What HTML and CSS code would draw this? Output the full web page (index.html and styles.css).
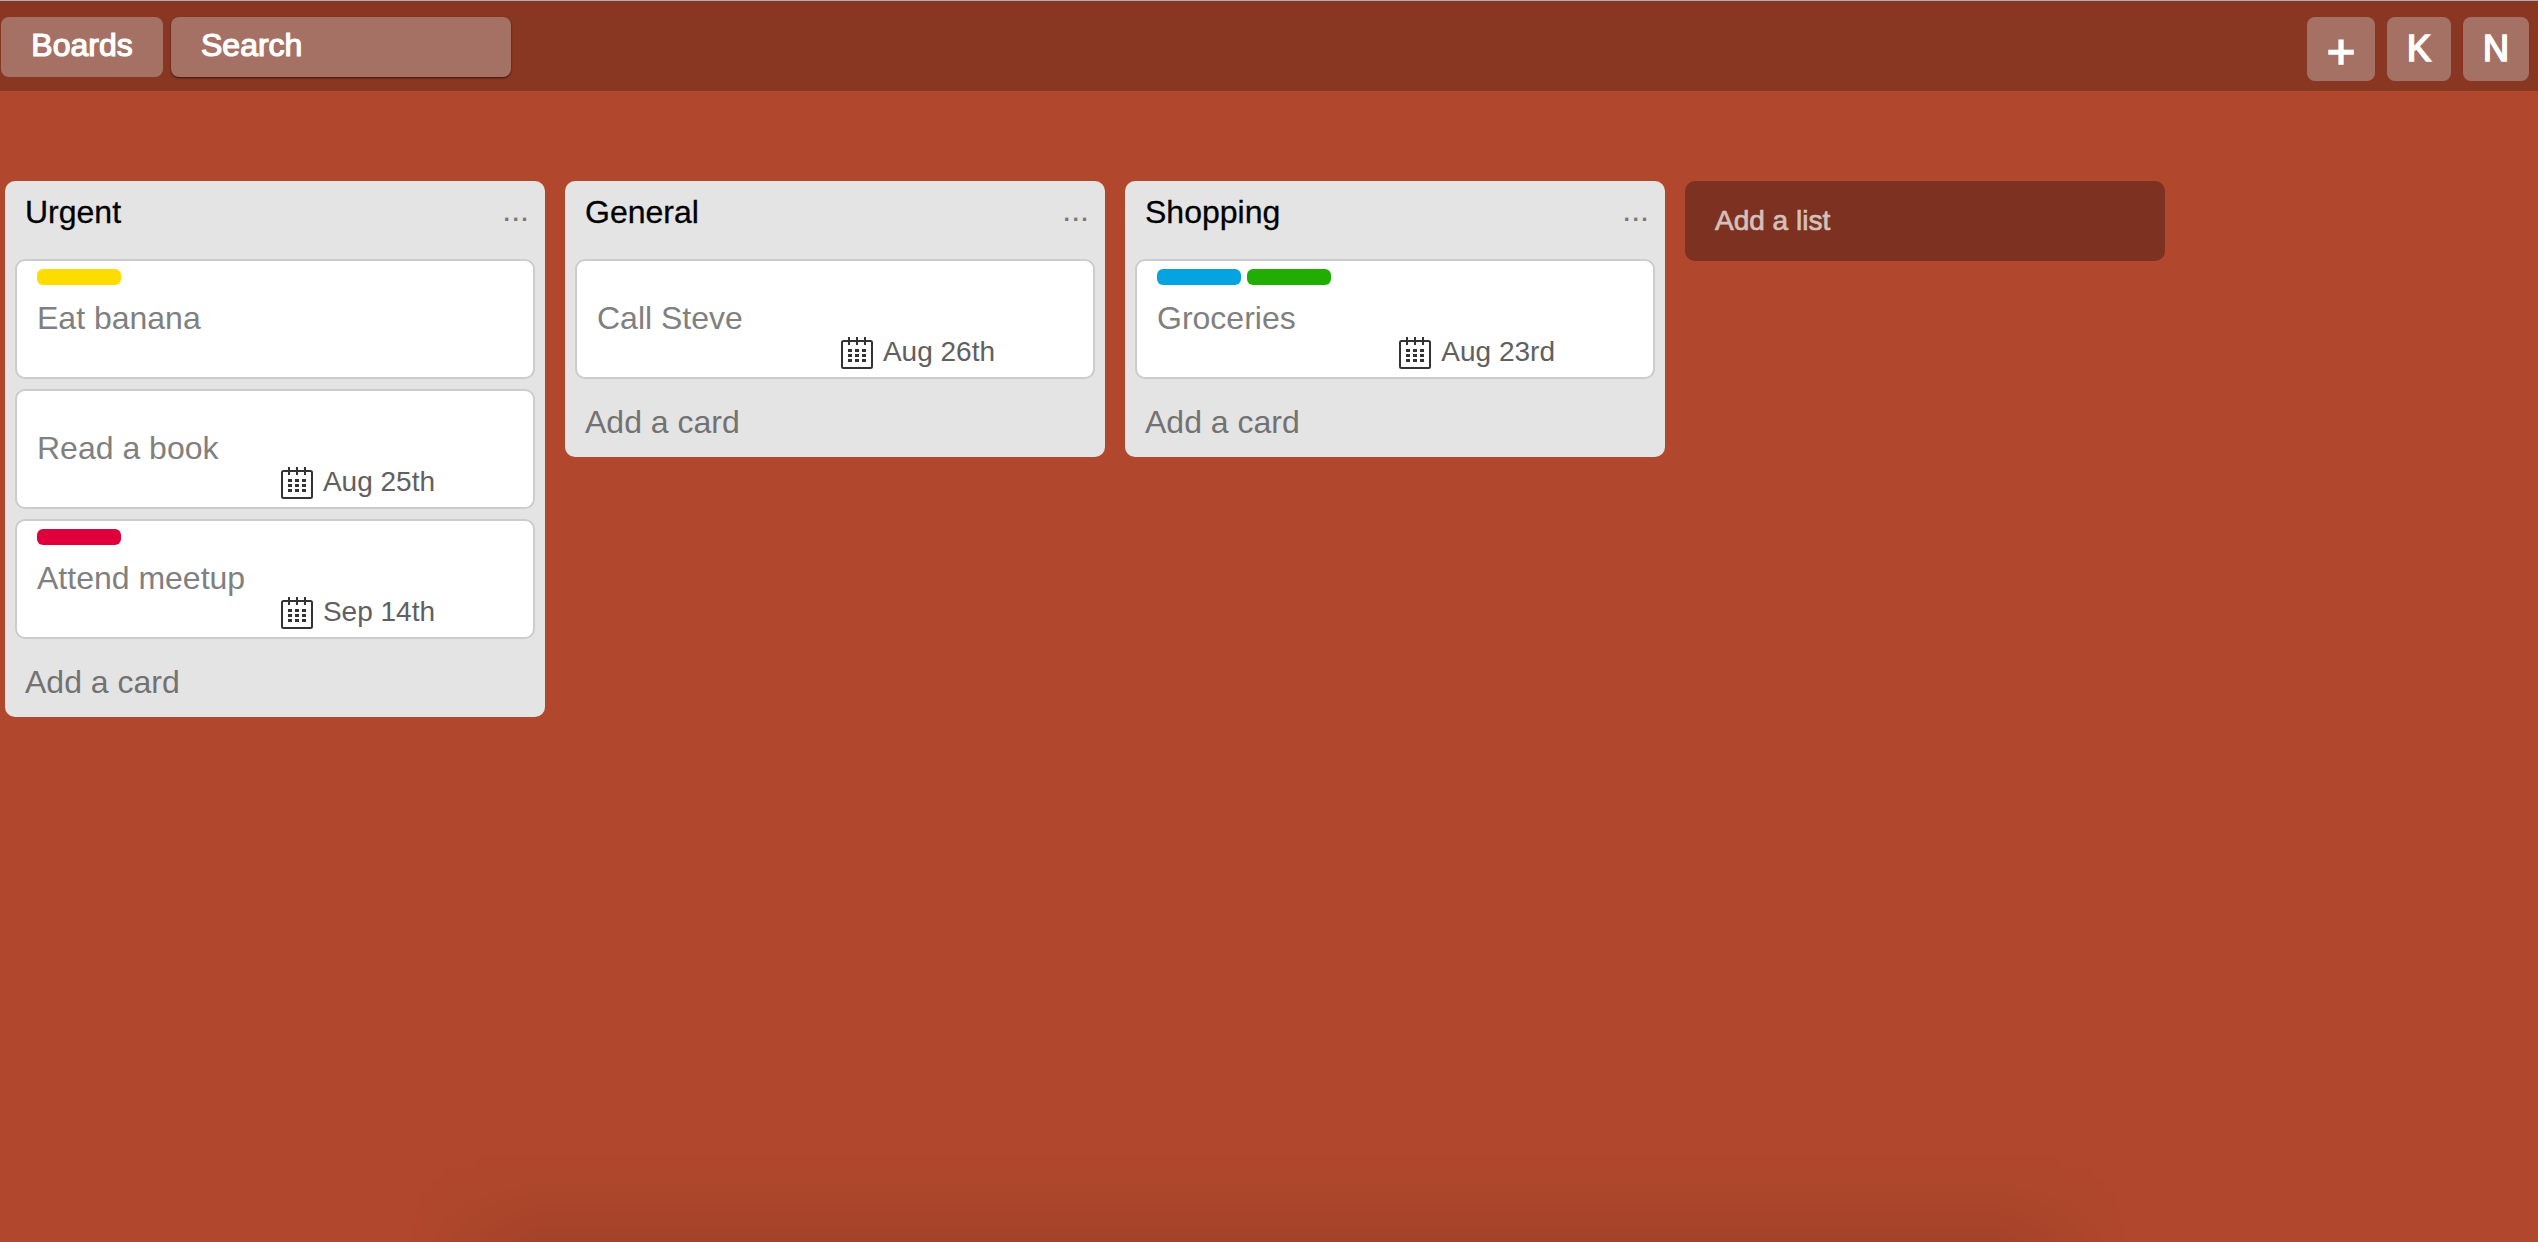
FILE: index.html
```html
<!DOCTYPE html>
<html lang="en">
<head>
<meta charset="utf-8">
<title>Board</title>
<link rel="stylesheet" href="styles.css">
</head>
<body>
<svg class="sprite" width="0" height="0" aria-hidden="true">
  <symbol id="calendar" viewBox="0 0 32 32">
    <rect x="1" y="4" width="30" height="27" rx="1.5" fill="none" stroke="#333" stroke-width="2"/>
    <path d="M8 0v8M16 0v8M24 0v8" stroke="#333" stroke-width="2"/>
    <path d="M7 13.5h4M14 13.5h4M21 13.5h4M7 18.5h4M14 18.5h4M21 18.5h4M7 23.5h4M14 23.5h4M21 23.5h4" stroke="#333" stroke-width="3"/>
  </symbol>
</svg>
<header class="topbar">
  <button class="btn btn-boards">Boards</button>
  <div class="btn search">Search</div>
  <nav class="actions">
    <button class="btn square add">+</button>
    <button class="btn square user">K</button>
    <button class="btn square account">N</button>
  </nav>
</header>
<main class="board">
  <section class="list">
    <header class="list-head"><h2 class="list-title">Urgent</h2><span class="list-menu">...</span></header>
    <div class="cards">
      <article class="card">
        <div class="labels"><span class="label yellow"></span></div>
        <h3 class="card-title">Eat banana</h3>
      </article>
      <article class="card">
        <div class="labels"></div>
        <h3 class="card-title">Read a book</h3>
        <div class="due"><svg class="icon"><use href="#calendar"/></svg><span>Aug 25th</span></div>
      </article>
      <article class="card">
        <div class="labels"><span class="label red"></span></div>
        <h3 class="card-title">Attend meetup</h3>
        <div class="due"><svg class="icon"><use href="#calendar"/></svg><span>Sep 14th</span></div>
      </article>
    </div>
    <div class="add-card">Add a card</div>
  </section>
  <section class="list">
    <header class="list-head"><h2 class="list-title">General</h2><span class="list-menu">...</span></header>
    <div class="cards">
      <article class="card">
        <div class="labels"></div>
        <h3 class="card-title">Call Steve</h3>
        <div class="due"><svg class="icon"><use href="#calendar"/></svg><span>Aug 26th</span></div>
      </article>
    </div>
    <div class="add-card">Add a card</div>
  </section>
  <section class="list">
    <header class="list-head"><h2 class="list-title">Shopping</h2><span class="list-menu">...</span></header>
    <div class="cards">
      <article class="card">
        <div class="labels"><span class="label blue"></span><span class="label green"></span></div>
        <h3 class="card-title">Groceries</h3>
        <div class="due"><svg class="icon"><use href="#calendar"/></svg><span>Aug 23rd</span></div>
      </article>
    </div>
    <div class="add-card">Add a card</div>
  </section>
  <div class="add-list">Add a list</div>
</main>
<div class="dock-shadow"></div>
</body>
</html>
```

FILE: styles.css
```css
* { box-sizing: border-box; }

body {
  margin: 0;
  position: relative;
  height: 1242px;
  overflow: hidden;
  background: #b1482d;
  font-family: "Liberation Sans", Arial, sans-serif;
  font-size: 32px;
  color: #000;
}

h2, h3 { margin: 0; font-size: inherit; font-weight: 400; }

.sprite { position: absolute; }

.topbar {
  display: flex;
  align-items: flex-start;
  height: 91px;
  padding: 16px 9px 0 1px;
  border-top: 1px solid #b0b0b0;
  background: #893623;
}

.btn {
  height: 60px;
  padding: 0;
  border: 0;
  border-radius: 8px;
  background: #a57164;
  color: #fff;
  font: 400 32px/56px "Liberation Sans", Arial, sans-serif;
  -webkit-text-stroke: 1.2px #fff;
}

.btn-boards {
  display: flex;
  justify-content: center;
  width: 162px;
}

.search {
  width: 340px;
  margin-left: 8px;
  padding-left: 30px;
  box-shadow: 0 1px 2px rgba(0, 0, 0, 0.6);
}

.actions {
  display: flex;
  gap: 12px;
  margin-left: auto;
}

.square {
  display: flex;
  justify-content: center;
  height: 64px;
  font-size: 36px;
  line-height: 63px;
  -webkit-text-stroke-width: 1.7px;
}

.add { width: 68px; font-size: 49px; line-height: 69px; }
.user { width: 64px; }
.account { width: 66px; }

.board {
  display: flex;
  align-items: flex-start;
  gap: 20px;
  padding: 90px 0 0 5px;
}

.list {
  flex: none;
  width: 540px;
  padding: 0 10px;
  border-radius: 10px;
  background: #e4e4e4;
}

.list-head {
  display: flex;
  justify-content: space-between;
  height: 78px;
  padding: 0 6px 0 10px;
}

.list-title { line-height: 62px; -webkit-text-stroke: 0.3px #000; }
.list-menu { line-height: 58px; color: #777; }

.cards {
  display: flex;
  flex-direction: column;
  gap: 10px;
}

.card {
  height: 120px;
  padding: 8px 20px 0;
  border: 2px solid #ccc;
  border-radius: 10px;
  background: #fff;
}

.labels {
  display: flex;
  gap: 6px;
  height: 16px;
  margin-bottom: 15px;
}

.label { width: 84px; border-radius: 6px; }
.yellow { background: #ffdc00; }
.red { background: #df003b; }
.blue { background: #05a4e0; }
.green { background: #20ae05; }

.card-title { line-height: 36px; color: #808080; }

.due {
  display: flex;
  justify-content: flex-end;
  gap: 10px;
  height: 32px;
  margin-top: 1px;
  padding-right: 78px;
  color: #606060;
  font-size: 28px;
  line-height: 29px;
}

.icon { width: 32px; height: 32px; }

.add-card {
  height: 78px;
  padding: 8px 10px 0;
  color: #727272;
  line-height: 70px;
}

.add-list {
  width: 480px;
  height: 80px;
  padding-left: 30px;
  border-radius: 10px;
  background: #7d3120;
  color: #d6c0bb;
  font-size: 28px;
  line-height: 80px;
  -webkit-text-stroke: 0.7px #d6c0bb;
}

/* Soft shadow rising from the bottom edge of the window */
.dock-shadow {
  position: absolute;
  bottom: 0;
  left: 410px;
  width: 1716px;
  height: 90px;
  background: linear-gradient(to top, rgba(0, 0, 0, 0.075), rgba(0, 0, 0, 0.04) 35%, rgba(0, 0, 0, 0.012) 65%, transparent);
  -webkit-mask: linear-gradient(to right, transparent, #000 130px, #000 1586px, transparent);
  mask: linear-gradient(to right, transparent, #000 130px, #000 1586px, transparent);
}
```
